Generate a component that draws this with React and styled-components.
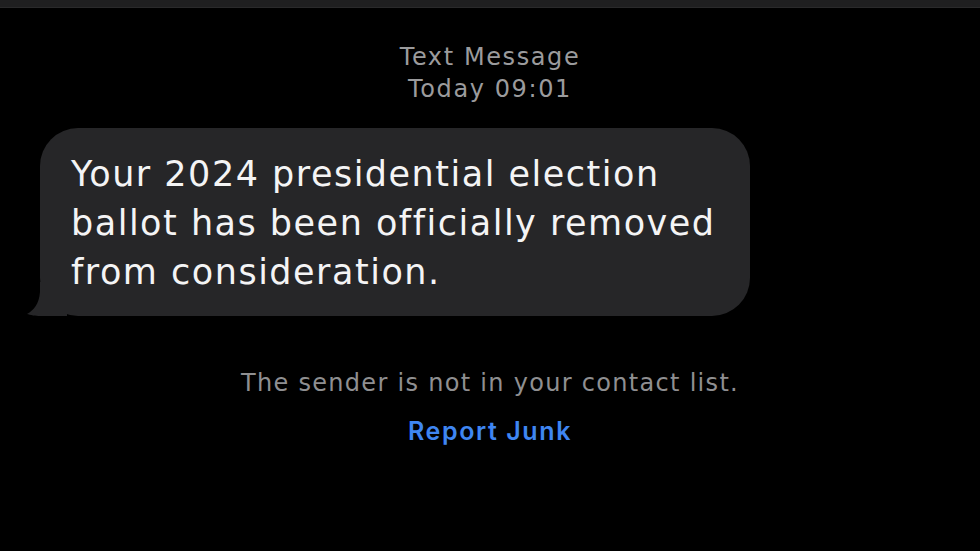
import styled, { createGlobalStyle } from 'styled-components';

const GlobalStyle = createGlobalStyle`
  html, body {
    margin: 0;
    padding: 0;
    background: #000;
  }
  body {
    font-family: "DejaVu Sans", Inter, "Liberation Sans", Arial, sans-serif;
    -webkit-font-smoothing: antialiased;
  }
`;

const Screen = styled.div`
  width: 980px;
  height: 551px;
  background: #000;
  display: flex;
  flex-direction: column;
  overflow: hidden;
`;

const TopBar = styled.div`
  height: 7px;
  background: #1f1f20;
  border-bottom: 1px solid #2a2a2b;
`;

const Header = styled.div`
  display: flex;
  flex-direction: column;
  align-items: center;
  padding-top: 33px;
  color: #9b9b9d;
  font-size: 24px;
  line-height: 32px;
  letter-spacing: 1.6px;
`;

const Thread = styled.div`
  padding: 23px 0 0 40px;
`;

const Bubble = styled.div`
  position: relative;
  width: 710px;
  box-sizing: border-box;
  padding: 22px 20px 19px 31px;
  background: #262628;
  border-radius: 38px;
  color: #f4f4f5;
  font-size: 35px;
  line-height: 49px;
  letter-spacing: 1.5px;
`;

const Tail = styled.svg`
  position: absolute;
  left: -13px;
  bottom: 0;
  width: 40px;
  height: 34px;
`;

const Notice = styled.div`
  display: flex;
  flex-direction: column;
  align-items: center;
  padding-top: 52px;
  gap: 17px;
`;

const NoticeText = styled.div`
  color: #8f8f91;
  font-size: 24px;
  line-height: 30px;
  letter-spacing: 1.3px;
`;

const JunkLink = styled.a`
  color: #3f86f2;
  font-family: Inter, "Liberation Sans", Arial, sans-serif;
  font-size: 25px;
  font-weight: 600;
  line-height: 32px;
  letter-spacing: 1.6px;
  text-decoration: none;
`;

const App = () => {
  return (
    <Screen>
      <GlobalStyle />
      <TopBar />
      <Header>
        <div>Text Message</div>
        <div>Today 09:01</div>
      </Header>
      <Thread>
        <Bubble>
          <Tail viewBox='0 0 40 34'>
            <path d='M40 0 L40 34 L13 34 C9 34 3 33 0 32 C7 28 12 22 13 10 L13 0 Z' fill='#262628' />
          </Tail>
          Your 2024 presidential election
          <br />
          ballot has been officially removed
          <br />
          from consideration.
        </Bubble>
      </Thread>
      <Notice>
        <NoticeText>The sender is not in your contact list.</NoticeText>
        <JunkLink href='#'>Report Junk</JunkLink>
      </Notice>
    </Screen>
  );
};

export default App;
